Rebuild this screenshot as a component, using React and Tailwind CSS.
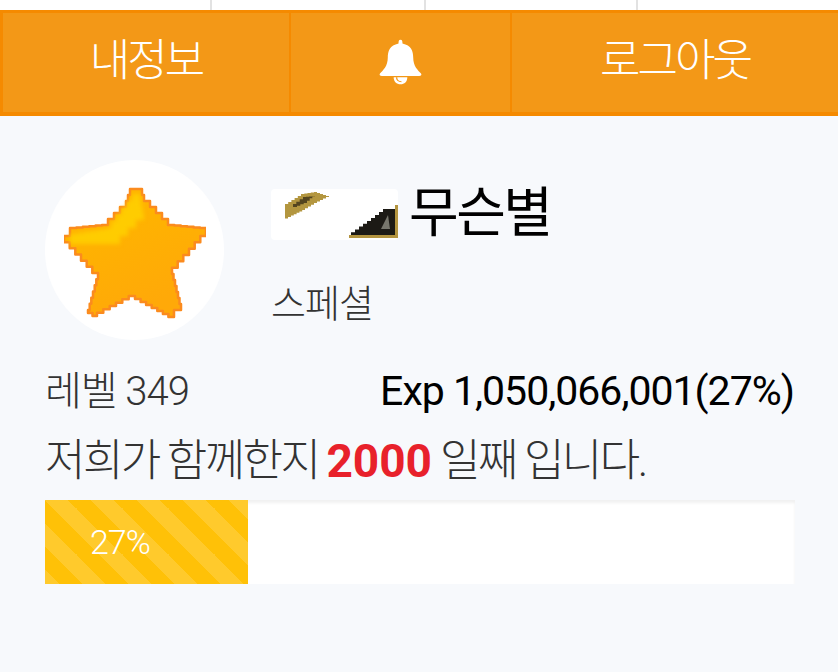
import React from 'react';

const font = 'font-["Roboto","Noto_Sans_CJK_KR",sans-serif]';

// turns a polygon into a stair-stepped outline, the source images are low-res pixel art
const stairs = (pts, step) => {
  let d = `M${pts[0][0]} ${pts[0][1]}`;
  pts.forEach((p, i) => {
    const q = pts[(i + 1) % pts.length];
    const n = Math.max(1, Math.round(Math.max(Math.abs(q[0] - p[0]), Math.abs(q[1] - p[1])) / step));
    for (let k = 1; k <= n; k++) {
      const x = p[0] + ((q[0] - p[0]) * k) / n;
      const y = p[1] + ((q[1] - p[1]) * k) / n;
      const py = p[1] + ((q[1] - p[1]) * (k - 1)) / n;
      d += `L${x.toFixed(1)} ${py.toFixed(1)}L${x.toFixed(1)} ${y.toFixed(1)}`;
    }
  });
  return d + 'Z';
};

const starOutline = [
  [66, 3], [76, 3], [80, 15], [104, 39], [136, 42], [142, 50], [108, 88], [117, 124], [110, 131],
  [71, 110], [33, 130], [24, 124], [34, 87], [0, 50], [6, 42], [38, 39], [62, 15],
];
const starLight = [[68, 8], [75, 8], [80, 34], [56, 58], [10, 58], [6, 48], [42, 42]];

const Star = () => (
  <svg viewBox="0 0 142 134" className="w-[142px] h-[134px] blur-[0.7px]">
    <defs>
      <linearGradient id="starFill" x1="0.3" y1="0.2" x2="0.6" y2="0.9">
        <stop offset="0" stopColor="#ffb400" />
        <stop offset="1" stopColor="#ffa908" />
      </linearGradient>
    </defs>
    <path d={stairs(starOutline, 6)} fill="url(#starFill)" stroke="#fb8b1e" strokeWidth="2.5" strokeLinejoin="round" />
    <path d={stairs(starLight, 7)} fill="#ffcc00" className="blur-[2px]" />
  </svg>
);

const Rank = () => (
  <div className="w-[127px] h-[51px] bg-white rounded-sm">
    <svg viewBox="0 0 127 51" className="w-[127px] h-[51px] blur-[0.4px]">
      <path d={stairs([[14, 15], [30, 5], [43, 3], [58, 8], [46, 14], [34, 21], [20, 28], [14, 31]], 3)} fill="#b3963f" />
      <path d={stairs([[22, 15], [32, 8], [44, 7], [36, 14], [26, 18]], 3)} fill="#54451f" />
      <path d={stairs([[80, 46], [124, 46], [124, 20], [116, 20], [100, 32]], 4)} fill="#1c1a15" />
      <path d="M78 46 H127 V49 H78 Z M124 16 H127 V47 H124 Z" fill="#b3943f" />
      <path d="M110 40 L117 26 L119 40 Z" fill="#77766c" />
    </svg>
  </div>
);

const Bell = () => (
  <svg viewBox="0 0 44 72" preserveAspectRatio="none" className="w-[43px] h-[46px]" fill="white">
    <path d="M22 1 C24 1 24 4 24 7 C33 10 35 19 35 29 C35 43 40 49 43 54 C44 56 43 58 41 58 L3 58 C1 58 0 56 1 54 C4 49 9 43 9 29 C9 19 11 10 20 7 C20 4 20 1 22 1 Z" />
    <path d="M15 60 L29 60 C29 67 26 71 22 71 C18 71 15 67 15 60 Z" />
    <path d="M18 60 C18 64 20 67 23 67" fill="none" stroke="#f4991a" strokeWidth="1.4" />
  </svg>
);

export default function App() {
  return (
    <div className={`${font} w-[838px] h-[672px] bg-[#f7f9fc] overflow-hidden`}>
      {/* strip of the menu above */}
      <div className="h-[10px] bg-white flex">
        <div className="w-[212px] border-r-2 border-[#e2e2e2]" />
        <div className="w-[214px] border-r-2 border-[#e2e2e2]" />
        <div className="w-[212px] border-r-2 border-[#e2e2e2]" />
      </div>

      {/* buttons */}
      <div className="flex h-[106px] bg-[#f39817] border-t-[3px] border-b-[4px] border-[#f58a00] text-white text-[44px] font-light tracking-[-3px]">
        <div className="w-[291px] border-l-[3px] border-r-2 border-[#f58a00] flex items-center justify-center pb-[3px]">내정보</div>
        <div className="w-[221px] border-r-2 border-[#f58a00] flex items-center justify-center pb-[2px]">
          <Bell />
        </div>
        <div className="flex-1 flex items-center justify-center pb-[3px]">로그아웃</div>
      </div>

      <div className="px-[45px] pt-[44px]">
        {/* profile */}
        <div className="flex">
          <div className="w-[179px] h-[180px] shrink-0 rounded-full bg-white flex items-center justify-center pt-[5px]">
            <Star />
          </div>
          <div className="ml-[47px] pt-[24px]">
            <div className="flex items-center h-[60px]">
              <Rank />
              <span className="ml-[11px] text-[54px] text-black tracking-[-2.5px] leading-none">무슨별</span>
            </div>
            <div className="mt-[41px] text-[38px] font-light text-[#333] tracking-[-1px] leading-none">스페셜</div>
          </div>
        </div>

        {/* level + exp */}
        <div className="flex justify-between items-center mt-[28px] h-[48px] w-[749px]">
          <span className="text-[40px] font-light text-[#333] tracking-[-1px]">레벨 349</span>
          <span className="text-[41px] text-black font-normal tracking-[-1px]">Exp 1,050,066,001(27%)</span>
        </div>

        <div className="mt-[15px] h-[60px] flex items-center text-[44px] font-light text-[#333] tracking-[-2.6px] whitespace-nowrap">
          <span>저희가 함께한지&nbsp;</span>
          <span className="font-bold text-[46px] text-[#e8212b] tracking-[0px]">2000</span>
          <span>&nbsp;일째 입니다.</span>
        </div>

        {/* progress */}
        <div className="mt-[9px] w-[750px] h-[84px] bg-white shadow-[inset_0_3px_3px_rgba(0,0,0,0.06)]">
          <div className="w-[203px] h-full bg-[#ffc107] bg-[linear-gradient(45deg,rgba(255,255,255,0.15)_25%,transparent_25%,transparent_50%,rgba(255,255,255,0.15)_50%,rgba(255,255,255,0.15)_75%,transparent_75%,transparent)] bg-[length:46px_46px] flex items-center pl-[45px] text-white text-[34px] font-light tracking-[-1px]">
            27%
          </div>
        </div>
      </div>
    </div>
  );
}
